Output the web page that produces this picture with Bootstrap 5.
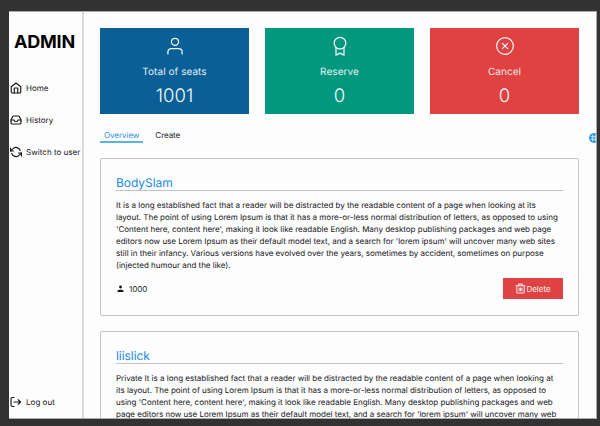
<!DOCTYPE html>
<html lang="en">
<head>
<meta charset="utf-8">
<meta name="viewport" content="width=device-width, initial-scale=1">
<title>Admin</title>
<link href="https://cdn.jsdelivr.net/npm/bootstrap@5.3.0/dist/css/bootstrap.min.css" rel="stylesheet">
<style>
  body { font-family: Inter, sans-serif; background: #323232; color: #16161a; font-size: 8px; height: 426px; padding: 11px 3px 7px 9px; text-rendering: geometricPrecision; }
  svg { display: block; fill: none; stroke: currentColor; stroke-width: 2; stroke-linecap: round; stroke-linejoin: round; flex: none; }
  .app-window { background: #fdfdfd; border: 1px solid #aaa; border-left: 0; height: 408px; }
  .sidebar { width: 75px; border-right: 2px solid #d9d9de; padding: 20px 0 9px; flex: none; }
  .brand { font-size: 18px; line-height: 22px; font-weight: 700; color: #000; letter-spacing: -.2px; padding-right: 2px; }
  .side-link { color: #16161a; gap: 4px; height: 14px; padding-left: 1px; white-space: nowrap; text-decoration: none; letter-spacing: .03px; }
  .side-link svg { width: 12px; height: 12px; stroke-width: 2.3; }
  .side-menu { margin-top: 27px; gap: 18px; }
  .content { padding: 16px 17px 0 16px; }
  .stats { gap: 16px; }
  .stat { height: 85.5px; color: #f4f8fa; padding-top: 8px; }
  .stat svg { width: 20px; height: 20px; stroke-width: 1.5; }
  .stat-label { font-size: 10px; line-height: 14px; margin-top: 8.5px; letter-spacing: .05px; opacity: .92; }
  .stat-value { font-size: 18.5px; line-height: 22px; margin-top: 6.5px; font-weight: 300; }
  .bg-seats { background: #0a6096; }
  .bg-reserve { background: #02987f; }
  .bg-cancel { background: #e04141; }
  .tabs { margin-top: 16px; height: 13.5px; gap: 8px; }
  .tab-item { padding: 0 4px; line-height: 11px; color: #16161a; border-bottom: 1.5px solid transparent; text-decoration: none; height: 13px; letter-spacing: -.05px; }
  .tab-item.current { color: #2c92dc; border-bottom: 2px solid #5cb2ee; }
  .post { border: 1px solid #c3c3c8; border-radius: 2px; padding: 15px 15px 15px; margin-top: 15px; height: 158px; flex: none; }
  .post-title { font-size: 12px; line-height: 18px; color: #228be6; border-bottom: 1px solid #c3c3c8; margin: 0 0 8px; height: 17px; letter-spacing: -.05px; }
  .post-text { line-height: 12px; white-space: nowrap; margin: 0; letter-spacing: -.01px; }
  .post-foot { margin-top: 7.5px; height: 21px; }
  .post-foot .person { width: 9px; height: 9px; fill: #111; stroke: none; }
  .delete-btn { width: 60px; height: 21px; background: #e04141; color: #fff0f0; border: 0; border-radius: 0; font-size: 8px; padding: 0; }
  .delete-btn svg { width: 11px; height: 11px; stroke-width: 2.2; }
  .help-dot { left: 580px; top: 121px; width: 10px; height: 10px; background: #2f97e4; color: #fff; }
  .help-dot svg { width: 8px; height: 8px; }
</style>
<script src="https://cdn.jsdelivr.net/npm/bootstrap@5.3.0/dist/js/bootstrap.bundle.min.js"></script>
</head>
<body class="overflow-hidden">
<div class="app-window d-flex overflow-hidden position-relative">
  <nav class="sidebar d-flex flex-column">
    <div class="brand text-center">ADMIN</div>
    <div class="side-menu d-flex flex-column">
      <a class="side-link d-flex align-items-center" href="#"><svg viewBox="0 0 24 24"><path d="M2.500 9.500 12 2l9.500 7.500V20a2 2 0 0 1-2 2h-15a2 2 0 0 1-2-2z"/><path d="M8.500 22V12h7v10"/></svg>Home</a>
      <a class="side-link d-flex align-items-center" href="#"><svg viewBox="0 0 24 24"><path d="M22 12h-6l-2 3h-4l-2-3H2"/><path d="M5.450 5.110 2 12v6a2 2 0 0 0 2 2h16a2 2 0 0 0 2-2v-6l-3.450-6.890A2 2 0 0 0 16.760 4H7.240a2 2 0 0 0-1.790 1.110z"/></svg>History</a>
      <a class="side-link d-flex align-items-center" href="#"><svg viewBox="0 0 24 24"><path d="M1 4v6h6M23 20v-6h-6"/><path d="M20.500 9A9 9 0 0 0 5.600 5.600L1 10m22 4-4.600 4.400A9 9 0 0 1 3.500 15"/></svg>Switch to user</a>
    </div>
    <a class="side-link d-flex align-items-center mt-auto" href="#"><svg viewBox="0 0 24 24"><path d="M8 3H5a3 3 0 0 0-3 3v12a3 3 0 0 0 3 3h3M8 12h13M16.500 7.500 21 12l-4.500 4.500"/></svg>Log out</a>
  </nav>
  <main class="content flex-grow-1 d-flex flex-column">
    <div class="stats d-flex">
      <div class="stat bg-seats flex-fill w-100 d-flex flex-column align-items-center">
        <svg viewBox="0 0 24 24"><circle cx="12" cy="7" r="4.300"/><path d="M3.500 21.500V19a4 4 0 0 1 4-4h9a4 4 0 0 1 4 4v2.500"/></svg>
        <div class="stat-label">Total of seats</div><div class="stat-value">1001</div>
      </div>
      <div class="stat bg-reserve flex-fill w-100 d-flex flex-column align-items-center">
        <svg viewBox="0 0 24 24"><circle cx="12" cy="8.500" r="7"/><path d="M7.200 14v9l4.800-2.500 4.800 2.500v-9"/></svg>
        <div class="stat-label">Reserve</div><div class="stat-value">0</div>
      </div>
      <div class="stat bg-cancel flex-fill w-100 d-flex flex-column align-items-center">
        <svg viewBox="0 0 24 24"><circle cx="12" cy="12" r="10"/><path d="m8.800 8.800 6.400 6.400m0-6.400-6.400 6.400"/></svg>
        <div class="stat-label">Cancel</div><div class="stat-value">0</div>
      </div>
    </div>
    <div class="tabs d-flex">
      <a class="tab-item current" href="#">Overview</a>
      <a class="tab-item" href="#">Create</a>
    </div>
    <article class="post">
      <h2 class="post-title fw-normal">BodySlam</h2>
      <p class="post-text">It is a long established fact that a reader will be distracted by the readable content of a page when looking at its<br>layout. The point of using Lorem Ipsum is that it has a more-or-less normal distribution of letters, as opposed to using<br>'Content here, content here', making it look like readable English. Many desktop publishing packages and web page<br>editors now use Lorem Ipsum as their default model text, and a search for 'lorem ipsum' will uncover many web sites<br>still in their infancy. Various versions have evolved over the years, sometimes by accident, sometimes on purpose<br>(injected humour and the like).</p>
      <div class="post-foot d-flex align-items-center justify-content-between">
        <span class="d-flex align-items-center gap-1"><svg class="person" viewBox="0 0 9 9"><circle cx="4.500" cy="3" r="1.400"/><path d="M1.500 8V7c0-1 1.500-1.300 3-1.300s3 .3 3 1.300v1z"/></svg>1000</span>
        <button class="delete-btn d-flex align-items-center justify-content-center" type="button"><svg viewBox="0 0 24 24"><path d="M2 6h20M8 6V2h8v4M4 6v14a2 2 0 0 0 2 2h12a2 2 0 0 0 2-2V6M9 11v6M12 11v6M15 11v6"/></svg>Delete</button>
      </div>
    </article>
    <article class="post">
      <h2 class="post-title fw-normal">liislick</h2>
      <p class="post-text">Private It is a long established fact that a reader will be distracted by the readable content of a page when looking at<br>its layout. The point of using Lorem Ipsum is that it has a more-or-less normal distribution of letters, as opposed to<br>using 'Content here, content here', making it look like readable English. Many desktop publishing packages and web<br>page editors now use Lorem Ipsum as their default model text, and a search for 'lorem ipsum' will uncover many web</p>
    </article>
  </main>
  <span class="help-dot position-absolute rounded-circle d-flex align-items-center justify-content-center"><svg viewBox="0 0 24 24"><path d="M8 3v18M16 3v18M3 8h18M3 16h18"/></svg></span>
</div>
</body>
</html>
